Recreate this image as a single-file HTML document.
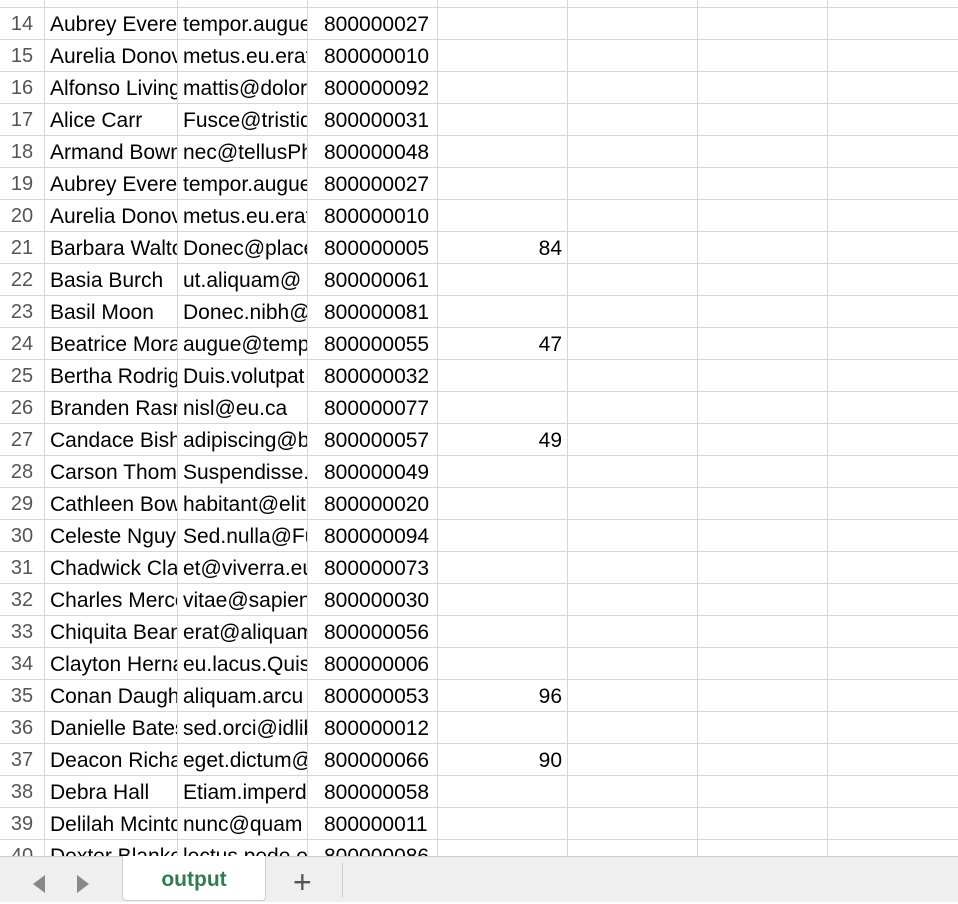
<!DOCTYPE html><html><head><style>
body{margin:0;width:958px;height:902px;overflow:hidden;background:#fff;font-family:"Liberation Sans",sans-serif;position:relative}
.g{position:absolute;left:0;top:0;width:958px;height:856px;overflow:hidden}
.r{position:absolute;left:0;height:32px;width:958px;border-bottom:1px solid #d6d6d6;box-sizing:border-box}
.c{position:absolute;top:0;height:31px;line-height:33px;font-size:21px;color:#000;overflow:hidden;white-space:nowrap;border-left:1px solid #d6d6d6;box-sizing:border-box;padding-left:5px}
.n{position:absolute;left:0;width:44px;text-align:center;line-height:33px;font-size:20px;color:#555}
.tb{position:absolute;left:0;top:856px;width:958px;height:46px;background:#efefef;border-top:1px solid #ccc;box-sizing:border-box}
</style></head><body><div class="g" id="g"></div>
<div class="tb">
<svg style="position:absolute;left:28px;top:16px" width="66" height="22"><polygon points="17,2 5,11 17,20" fill="#888"/><polygon points="49,2 61,11 49,20" fill="#888"/></svg>
<div style="position:absolute;left:122px;top:-1px;width:144px;height:45px;background:#fff;border:1px solid #ccc;border-top:none;border-radius:0 0 4px 4px;box-sizing:border-box;text-align:center;line-height:48px;color:#2e7d4f;font-weight:bold;font-size:21px">output</div>
<div style="position:absolute;left:293px;top:7px;font-size:32px;color:#555;line-height:36px">+</div>
<div style="position:absolute;left:342px;top:6px;width:1px;height:34px;background:#ccc"></div>
</div>
<script>
var d=[["","","",""],["Aubrey Everett","tempor.augue","800000027",""],["Aurelia Donovan","metus.eu.erat","800000010",""],["Alfonso Livingston","mattis@dolor","800000092",""],["Alice Carr","Fusce@tristique","800000031",""],["Armand Bowman","nec@tellusPh","800000048",""],["Aubrey Everett","tempor.augue","800000027",""],["Aurelia Donovan","metus.eu.erat","800000010",""],["Barbara Walton","Donec@placerat","800000005","84"],["Basia Burch","ut.aliquam@","800000061",""],["Basil Moon","Donec.nibh@","800000081",""],["Beatrice Moran","augue@tempor","800000055","47"],["Bertha Rodriguez","Duis.volutpat","800000032",""],["Branden Rasmussen","nisl@eu.ca","800000077",""],["Candace Bishop","adipiscing@b","800000057","49"],["Carson Thompson","Suspendisse.","800000049",""],["Cathleen Bowen","habitant@elit","800000020",""],["Celeste Nguyen","Sed.nulla@Fu","800000094",""],["Chadwick Clark","et@viverra.eu","800000073",""],["Charles Mercer","vitae@sapien","800000030",""],["Chiquita Bean","erat@aliquam","800000056",""],["Clayton Hernandez","eu.lacus.Quisque","800000006",""],["Conan Daugherty","aliquam.arcu","800000053","96"],["Danielle Bates","sed.orci@idlibero","800000012",""],["Deacon Richardson","eget.dictum@","800000066","90"],["Debra Hall","Etiam.imperdiet","800000058",""],["Delilah Mcintosh","nunc@quam","800000011",""],["Dexter Blankenship","lectus.pede.et","800000086",""]];
var h="",xs=[44,177,307,437,567,697,827];
for(var i=0;i<d.length;i++){var y=-24+i*32;h+='<div class="r" style="top:'+y+'px"><div class="n">'+(13+i)+'</div>';
for(var j=0;j<7;j++){var w=(j==6?958:xs[j+1])-xs[j];var t=j<3?d[i][j]:"";var st="left:"+xs[j]+"px;width:"+w+"px;";
if(j==2)st+="padding-left:16px;";
h+='<div class="c" style="'+st+'">'+t+'</div>';}
if(d[i][3])h+='<div style="position:absolute;left:437px;width:125px;text-align:right;line-height:33px;font-size:21px;color:#000">'+d[i][3]+'</div>';
h+='</div>';}
document.getElementById("g").innerHTML=h;
</script></body></html>
